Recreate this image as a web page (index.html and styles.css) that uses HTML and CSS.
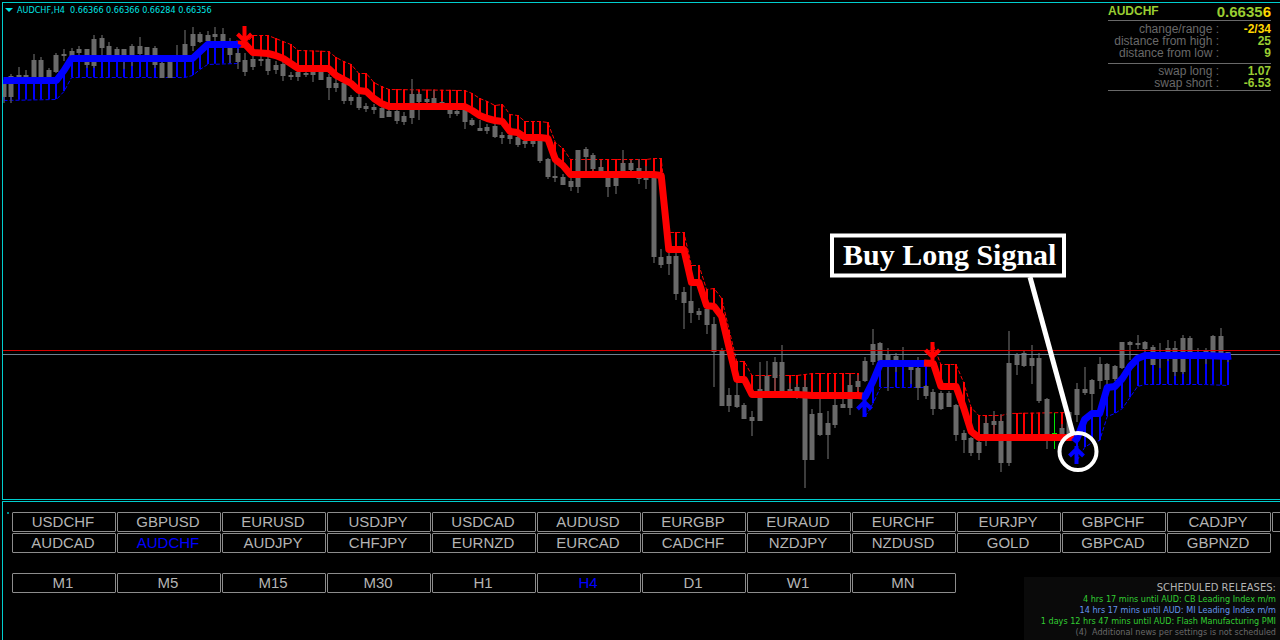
FILE: index.html
```html
<!DOCTYPE html>
<html lang="en">

<head>
    <meta charset="utf-8">
    <title>AUDCHF,H4</title>
    <link rel="stylesheet" href="styles.css">
</head>

<body>
    <main class="chart">
        <svg id="plot" class="plot" viewBox="3 3 1277 496">
            <g id="hatches"></g>
            <g id="candles"></g>
            <path class="ask" d="M3 350.5H1280" />
            <path class="bid" d="M3 354.5H1280" />
            <g id="trends"></g>
            <g id="arrows"></g>
            <g class="callout">
                <path class="pointer" d="M1030 277L1073 434" />
                <circle cx="1078" cy="451.500" r="18.500" />
                <rect x="832" y="235.500" width="232" height="40" />
                <text x="843" y="265">Buy Long Signal</text>
            </g>
        </svg>

        <div class="symbol">
            <svg class="caret" viewBox="0 0 8 4"><path d="M0 0H8L4 4Z" /></svg>
            <span>AUDCHF,H4&nbsp; 0.66366 0.66366 0.66284 0.66356</span>
        </div>

        <section class="info">
            <header>
                <h1>AUDCHF</h1>
                <strong>0.6635<span class="gold">6</span></strong>
            </header>
            <dl>
                <dt>change/range :</dt><dd class="gold">-2/34</dd>
                <dt>distance from high :</dt><dd>25</dd>
                <dt>distance from low :</dt><dd>9</dd>
            </dl>
            <dl class="swap">
                <dt>swap long :</dt><dd>1.07</dd>
                <dt>swap short :</dt><dd>-6.53</dd>
            </dl>
        </section>
    </main>

    <section class="panel">
        <div class="row">
            <button>USDCHF</button>
            <button>GBPUSD</button>
            <button>EURUSD</button>
            <button>USDJPY</button>
            <button>USDCAD</button>
            <button>AUDUSD</button>
            <button>EURGBP</button>
            <button>EURAUD</button>
            <button>EURCHF</button>
            <button>EURJPY</button>
            <button>GBPCHF</button>
            <button>CADJPY</button>
            <button></button>
        </div>
        <div class="row">
            <button>AUDCAD</button>
            <button class="active">AUDCHF</button>
            <button>AUDJPY</button>
            <button>CHFJPY</button>
            <button>EURNZD</button>
            <button>EURCAD</button>
            <button>CADCHF</button>
            <button>NZDJPY</button>
            <button>NZDUSD</button>
            <button>GOLD</button>
            <button>GBPCAD</button>
            <button>GBPNZD</button>
        </div>
        <div class="bottom">
            <div class="row">
                <button>M1</button>
                <button>M5</button>
                <button>M15</button>
                <button>M30</button>
                <button>H1</button>
                <button class="active">H4</button>
                <button>D1</button>
                <button>W1</button>
                <button>MN</button>
            </div>
            <aside class="news">
                <h2>SCHEDULED RELEASES:</h2>
                <p class="green">4 hrs 17 mins until AUD: CB Leading Index m/m</p>
                <p class="blue">14 hrs 17 mins until AUD: MI Leading Index m/m</p>
                <p class="green">1 days 12 hrs 47 mins until AUD: Flash Manufacturing PMI</p>
                <p class="gray">(4)&nbsp; Additional news per settings is not scheduled</p>
            </aside>
        </div>
    </section>

    <script src="script.js"></script>
</body>

</html>
```

FILE: styles.css
```css
body {
    display: flex;
    flex-direction: column;
    box-sizing: border-box;
    min-height: 100vh;
    margin: 0;
    padding: 2px 0 0 2px;
    background-color: #000;
    font-family: "Liberation Sans", Arial, sans-serif;
    overflow: hidden;
}

h1,
h2,
p,
dl,
dd {
    margin: 0;
}

.chart {
    position: relative;
    border: 1px solid #00cdcd;
    border-right: 0;
    margin-bottom: 1px;
}

.plot {
    display: block;
    width: 100%;
}

/* chart */
.wick {
    stroke: #505050;
    stroke-width: 1.5;
}

.body {
    fill: #696969;
}

.ask {
    stroke: #d80000;
}

.bid {
    stroke: #708090;
}

.live {
    stroke: #00e600;
    stroke-width: 1;
    fill: none;
}

.line {
    fill: none;
    stroke-width: 7;
    stroke-linejoin: round;
}

.hatch {
    fill: none;
    stroke-width: 2;
}

.band {
    fill: none;
    stroke-width: 1;
    stroke-dasharray: 4 2;
}

.arrow {
    fill: none;
    stroke-width: 4;
}

.up {
    stroke: #00f;
}

.down {
    stroke: #f00;
}

.callout rect,
.callout circle {
    fill: none;
    stroke: #fff;
    stroke-width: 4;
}

.callout rect {
    fill: #000;
}

.pointer {
    stroke: #fff;
    stroke-width: 5;
}

.callout text {
    fill: #fff;
    font: bold 30px "Liberation Serif", "Times New Roman", serif;
}

.symbol {
    position: absolute;
    top: 1px;
    left: 2px;
    display: flex;
    align-items: center;
    gap: 4px;
    color: #00e5e5;
    font: 9px/12px "DejaVu Sans Condensed", "DejaVu Sans", sans-serif;
    font-stretch: condensed;
}

.caret {
    width: 8px;
    height: 4px;
    fill: #00e5e5;
}

.info {
    position: absolute;
    top: 0;
    right: 9px;
    width: 163px;
    color: #9acd32;
    font-size: 12px;
}

.info header {
    display: flex;
    justify-content: space-between;
    height: 17px;
    line-height: 16px;
    border-bottom: 1px solid #696969;
}

.info h1 {
    font-size: 12px;
}

.info strong {
    font-size: 15px;
    line-height: 18px;
}

.info dl {
    display: grid;
    grid-template-columns: 111px 1fr;
    line-height: 12px;
    text-align: right;
    padding: 2px 0 4px;
    border-bottom: 1px solid #696969;
}

.info .swap {
    padding: 1px 0;
}

.info dt {
    color: #696969;
}

.info dd {
    font-weight: bold;
}

.info .gold {
    color: #ffd700;
}

/* symbol and timeframe buttons */
.panel {
    position: relative;
    flex: 1;
    border: solid #00cdcd;
    border-width: 1px 0 0 1px;
    padding: 10px 0 0 9px;
    overflow: hidden;
}

.panel::before {
    content: "";
    position: absolute;
    top: 10px;
    left: 4px;
    width: 2px;
    height: 2px;
    background-color: #008b8b;
}

.row {
    display: flex;
    gap: 1px;
    margin-bottom: 1px;
}

button {
    flex: none;
    width: 104px;
    height: 20px;
    padding: 0 2px 0 0;
    color: #b4b4b4;
    background-color: #000;
    border: 1px solid #8c8c8c;
    border-radius: 1px;
    font: 15px/18px "Liberation Sans", Arial, sans-serif;
    cursor: pointer;
}

button.active {
    color: #00f;
}

.bottom {
    display: flex;
    justify-content: space-between;
    margin-top: 20px;
}

.news {
    box-sizing: border-box;
    width: 256px;
    margin-top: 4px;
    padding: 5px 4px 2px 0;
    background-color: #0a0a0a;
    text-align: right;
    white-space: nowrap;
    font: 9px/11px "DejaVu Sans Condensed", "DejaVu Sans", sans-serif;
    font-stretch: condensed;
}

.news h2 {
    color: #b4b4b4;
    font: 10px/12px "DejaVu Sans", sans-serif;
}

.green {
    color: #32cd32;
}

.blue {
    color: #6495ed;
}

.gray {
    color: #696969;
}
```

FILE: script.js
```js
// high, body top, body bottom, low for every bar
const bars = [
    [80, 80, 96, 102], [74, 76, 96, 102], [67, 75, 78, 80], [70, 75, 77, 80], [54, 60, 77, 77],
    [57, 60, 77, 77], [68, 70, 77, 77], [53, 55, 71, 72], [49, 54, 55, 60], [48, 51, 55, 57],
    [46, 49, 52, 54], [49, 49, 64, 67], [35, 39, 65, 67], [35, 38, 47, 54], [42, 46, 54, 54],
    [47, 49, 54, 60], [49, 49, 60, 68], [44, 46, 58, 65], [37, 46, 53, 60], [47, 47, 54, 60],
    [46, 48, 64, 67], [62, 63, 77, 77], [61, 61, 77, 77], [45, 55, 58, 60], [30, 44, 54, 56],
    [27, 34, 45, 50], [32, 34, 41, 42], [31, 35, 40, 42], [27, 34, 36, 40], [28, 34, 41, 45],
    [38, 42, 54, 62], [49, 53, 61, 68], [53, 60, 71, 75], [56, 59, 66, 69], [56, 59, 60, 65],
    [56, 59, 70, 74], [61, 65, 69, 73], [61, 64, 75, 80], [72, 75, 76, 79], [68, 72, 76, 80],
    [71, 73, 74, 76], [66, 68, 74, 81], [68, 72, 79, 79], [74, 77, 87, 99], [79, 83, 87, 91],
    [82, 83, 100, 103], [95, 97, 100, 104], [94, 97, 107, 109], [103, 106, 108, 111], [104, 107, 109, 113],
    [107, 108, 117, 117], [110, 111, 116, 116], [110, 111, 120, 123], [112, 116, 121, 124], [79, 94, 117, 123],
    [92, 94, 101, 119], [98, 99, 101, 103], [90, 98, 103, 105], [101, 102, 104, 105], [109, 110, 113, 117],
    [109, 111, 113, 115], [109, 110, 121, 128], [118, 120, 124, 125], [120, 128, 130, 130], [124, 127, 130, 133],
    [124, 126, 136, 137], [132, 135, 137, 143], [133, 135, 138, 143], [135, 137, 144, 146], [139, 141, 143, 147],
    [138, 140, 143, 146], [140, 141, 160, 162], [158, 159, 176, 178], [160, 176, 177, 181], [174, 177, 184, 184],
    [178, 181, 186, 190], [150, 150, 186, 192], [147, 149, 156, 170], [153, 155, 168, 170], [160, 167, 172, 174],
    [176, 178, 186, 196], [176, 178, 185, 193], [150, 163, 172, 174], [160, 163, 169, 175], [159, 168, 178, 183],
    [166, 175, 179, 188], [176, 178, 256, 262], [249, 257, 264, 267], [252, 256, 263, 274], [253, 256, 293, 299],
    [287, 292, 302, 328], [286, 301, 312, 322], [308, 311, 314, 319], [307, 309, 324, 333], [317, 324, 351, 386],
    [348, 350, 405, 405], [388, 395, 405, 411], [380, 395, 406, 407], [403, 405, 418, 418], [411, 417, 420, 435],
    [362, 389, 420, 420], [361, 376, 390, 392], [357, 362, 377, 390], [345, 362, 390, 392], [383, 389, 392, 395],
    [384, 387, 394, 398], [380, 387, 459, 487], [409, 414, 459, 459], [397, 413, 434, 435], [411, 423, 434, 458],
    [398, 405, 424, 427], [398, 404, 407, 407], [374, 385, 407, 414], [375, 381, 386, 390], [357, 361, 380, 381],
    [329, 344, 361, 364], [342, 343, 360, 365], [348, 354, 359, 390], [353, 356, 361, 371], [347, 361, 362, 364],
    [364, 367, 369, 383], [357, 368, 387, 399], [385, 386, 395, 398], [389, 392, 408, 414], [391, 393, 408, 409],
    [391, 393, 406, 406], [404, 405, 434, 440], [430, 433, 439, 452], [437, 438, 452, 455], [440, 442, 452, 459],
    [417, 423, 440, 445], [411, 421, 424, 435], [414, 421, 462, 471], [331, 363, 462, 465], [353, 354, 364, 374],
    [351, 353, 365, 366], [345, 358, 365, 383], [353, 358, 400, 402], [398, 399, 435, 448], null,
    [424, 428, 436, 437], [411, 412, 436, 437], [383, 389, 414, 421], [367, 389, 392, 394], [379, 380, 393, 412],
    [357, 364, 380, 388], [363, 364, 379, 385], [365, 366, 378, 380], [342, 342, 367, 368], [341, 342, 344, 359],
    [335, 343, 344, 348], [341, 342, 348, 352], [345, 347, 364, 364], [343, 354, 356, 367], [340, 348, 354, 360],
    [341, 348, 371, 375], [335, 338, 371, 373], [336, 338, 354, 354], [348, 354, 356, 358], [348, 351, 354, 363],
    [335, 336, 354, 354], [328, 336, 354, 354], [352, 352, 358, 361]
];

// bar number, trend line, band; bars between two entries are interpolated
const trends = [
    { type: "down", start: [236, 44], end: [863, 396], keys: [
        [32, 44, 44], [33, 52, 35], [35, 53, 35], [36, 55, 38], [37, 58, 41], [38, 63, 44],
        [39, 68, 50], [43, 68, 51], [44, 75, 57], [45, 79, 61], [46, 83, 64], [47, 90, 73],
        [48, 91, 73], [49, 98, 82], [50, 103, 86], [51, 106, 89], [61, 106, 90], [62, 110, 93],
        [63, 115, 98], [64, 118, 101], [65, 120, 105], [66, 121, 104], [67, 131, 114], [68, 132, 115],
        [69, 137, 121], [71, 137, 121], [72, 138, 122], [73, 159, 142], [74, 165, 148], [75, 174, 159],
        [85, 174, 159], [86, 174, 158], [87, 175, 158], [88, 249, 232], [90, 249, 232], [91, 282, 265],
        [92, 282, 265], [93, 305, 289], [94, 306, 288], [95, 316, 298], [96, 348, 330], [97, 379, 361],
        [98, 379, 361], [99, 394, 375], [105, 394, 375], [107, 395, 373], [113, 395, 373]] },
    { type: "up", start: [3, 80], end: [238, 44], keys: [
        [0, 80, 100], [7, 80, 99], [8, 70, 91], [9, 58, 77], [24, 58, 77], [25, 58, 75],
        [26, 51, 69], [27, 44, 64], [31, 44, 63]] },
    { type: "up", start: [862, 396], end: [927, 363], keys: [
        [114, 396, 416], [115, 381, 403], [116, 363, 387], [122, 363, 387]] },
    { type: "down", start: [924, 363], end: [1074, 437], keys: [
        [123, 363, 345], [124, 386, 364], [126, 386, 364], [127, 407, 382], [128, 431, 407],
        [129, 437, 415], [132, 437, 415], [133, 437, 413], [141, 437, 412]] },
    { type: "up", start: [1074, 442], end: [1231, 356], keys: [
        [142, 438, 460], [143, 419, 447], [144, 413, 442], [145, 413, 440], [146, 387, 416],
        [147, 386, 413], [148, 378, 408], [149, 366, 397], [150, 358, 386], [151, 355, 384],
        [159, 355, 384], [162, 356, 385]] }
];

function barX(i) {
    return 3.5 + 7.56 * i;
}

function draw(parent, name, attrs) {
    let e = document.createElementNS("http://www.w3.org/2000/svg", name);
    for (let key in attrs)
        e.setAttribute(key, attrs[key]);
    document.getElementById(parent).append(e);
}

function drawCandles() {
    for (let i = 0; i < bars.length; i++) {
        let x = Math.round(barX(i));
        if (bars[i] == null) {
            draw("candles", "path", { class: "live", d: `M${x + 0.5} 413V449M${x - 2} 433.5h5` });
            continue;
        }
        let [high, top, bottom, low] = bars[i];
        draw("candles", "path", { class: "wick", d: `M${x} ${high}V${low + 1}` });
        draw("candles", "rect", { class: "body", x: x - 2.5, y: top, width: 5, height: bottom - top + 1 });
    }
}

function drawTrend(trend) {
    let keys = trend.keys;
    let line = [trend.start];
    let band = [];
    let hatch = "";
    for (let k = 0; k < keys.length; k++) {
        let [i, y, b] = keys[k];
        let next = keys[k + 1] || [i + 1, y, b];
        line.push([barX(i), y + 0.5]);
        band.push([barX(i), b + 0.5]);
        for (let j = i; j < next[0]; j++) {
            if (bars[j] == null)
                continue;
            let t = (j - i) / (next[0] - i);
            let x = Math.round(barX(j));
            hatch += `M${x} ${y + (next[1] - y) * t}V${b + (next[2] - b) * t}`;
        }
    }
    line.push(trend.end);
    draw("hatches", "path", { class: "hatch " + trend.type, d: hatch });
    draw("hatches", "polyline", { class: "band " + trend.type, points: band.join(" ") });
    draw("trends", "polyline", { class: "line " + trend.type, points: line.join(" ") });
}

function drawArrow(x, y, type) {
    // y is the tip of the arrow
    let s = type == "up" ? 1 : -1;
    draw("arrows", "path", {
        class: "arrow " + type,
        d: `M${x} ${y}V${y + 18 * s}M${x - 7} ${y + 10 * s}L${x} ${y + 3 * s}L${x + 7} ${y + 10 * s}`
    });
}

drawCandles();
trends.forEach(drawTrend);
drawArrow(244.5, 44, "down");
drawArrow(864.5, 399, "up");
drawArrow(932.5, 360, "down");
drawArrow(1076.5, 446, "up");
```
